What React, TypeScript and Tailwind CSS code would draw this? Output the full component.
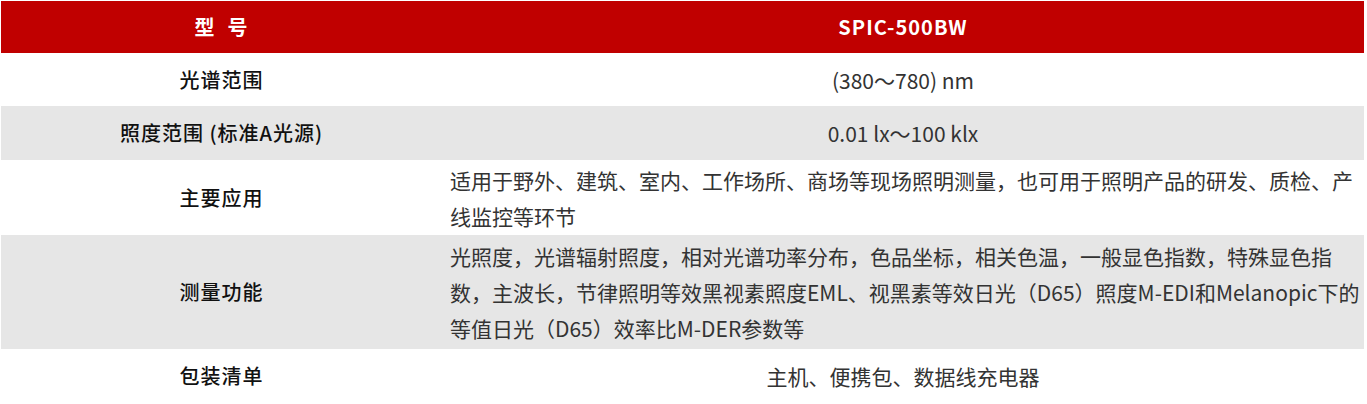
import React from "react";

const rows: { label: string; lines: string[]; gray: boolean; h: string; multi?: boolean }[] = [
  { label: "光谱范围", lines: ["(380～780) nm"], gray: false, h: "h-[53px]" },
  { label: "照度范围 (标准A光源)", lines: ["0.01 lx～100 klx"], gray: true, h: "h-[54px]" },
  {
    label: "主要应用",
    lines: [
      "适用于野外、建筑、室内、工作场所、商场等现场照明测量，也可用于照明产品的研发、质检、产",
      "线监控等环节",
    ],
    gray: false,
    h: "h-[75px]",
    multi: true,
  },
  {
    label: "测量功能",
    lines: [
      "光照度，光谱辐射照度，相对光谱功率分布，色品坐标，相关色温，一般显色指数，特殊显色指",
      "数，主波长，节律照明等效黑视素照度EML、视黑素等效日光（D65）照度M-EDI和Melanopic下的",
      "等值日光（D65）效率比M-DER参数等",
    ],
    gray: true,
    h: "h-[114px]",
    multi: true,
  },
  { label: "包装清单", lines: ["主机、便携包、数据线充电器"], gray: false, h: "h-[53px]" },
];

export default function App() {
  return (
    <div
      className="w-[1367px] h-[404px] overflow-hidden bg-white pl-px pt-px"
      style={{ fontFamily: '"Noto Sans CJK SC", "Noto Sans", sans-serif' }}
    >
      <div className="w-[1363px] flex flex-col">
        <div className="flex h-[52px] bg-[#c00000] text-white font-bold text-[20px] tracking-[1px]">
          <div className="w-[441px] flex items-center justify-center">
            <span className="mr-[12px]">型</span>
            <span>号</span>
          </div>
          <div className="flex-1 flex items-center justify-center">SPIC-500BW</div>
        </div>
        {rows.map((r) => (
          <div key={r.label} className={`flex ${r.h} ${r.gray ? "bg-[#e6e6e6]" : "bg-white"}`}>
            <div className="w-[441px] flex items-center justify-center text-[20px] font-medium text-[#111] tracking-[1px]">
              {r.label}
            </div>
            <div
              className={`w-[922px] flex flex-col justify-center text-[21px] leading-[36px] text-[#333] whitespace-nowrap ${
                r.multi ? "pl-[8px] items-start" : "items-center"
              }`}
            >
              {r.lines.map((l) => (
                <span key={l}>{l}</span>
              ))}
            </div>
          </div>
        ))}
      </div>
    </div>
  );
}
